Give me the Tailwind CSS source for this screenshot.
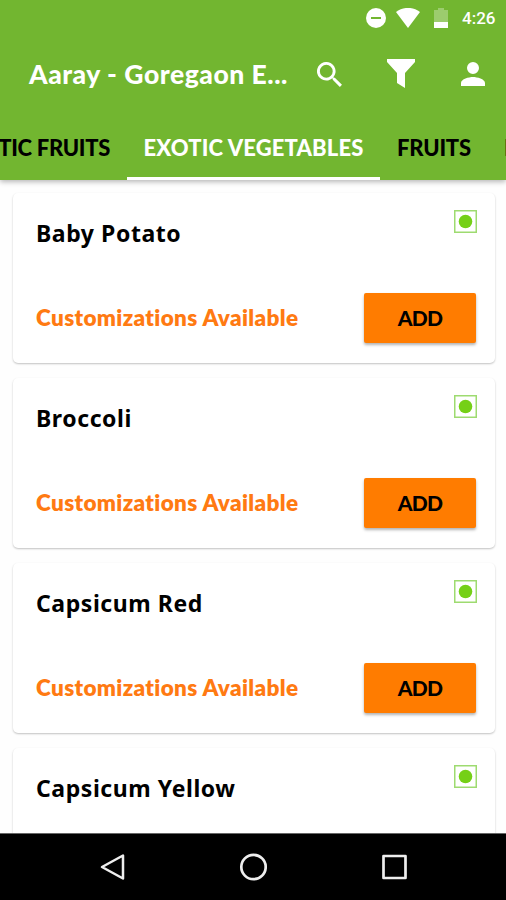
<!DOCTYPE html>
<html lang="en"><head><meta charset="utf-8"><title>Aaray</title>
<script src="https://cdn.jsdelivr.net/npm/@tailwindcss/browser@4"></script></head>
<body class="bg-white">
<div class="w-[506px] h-[900px] flex flex-col overflow-hidden font-['Lato',sans-serif]">
<header class="relative z-10 h-[180px] shrink-0 flex flex-col bg-[#72b630] text-white shadow-[0_2px_5px_rgba(0,0,0,0.28)]">
  <div class="h-[36px] flex items-center justify-end pr-[10px]">
    <svg class="w-5 h-5 mr-[10px]" viewBox="0 0 20 20"><circle cx="10" cy="10" r="10" fill="#fff"/><path d="M5 10H15" stroke="#72b630" stroke-width="2"/></svg>
    <svg class="w-6 h-5 mr-[14px]" viewBox="0 0 24 20"><path d="M0 4C7-1.500 17-1.500 24 4L12 20Z" fill="#fff"/></svg>
    <svg class="w-[14px] h-5 mr-[14px]" viewBox="0 0 14 20"><path d="M4 0H10V2H14V20H0V2H4Z" fill="#fff" opacity=".3"/><path d="M0 14H14V20H0Z" fill="#fff"/></svg>
    <span class="w-[34px] whitespace-nowrap font-['Roboto',sans-serif] font-medium text-[17px] leading-5">4:26</span>
  </div>
  <div class="h-[76px] flex items-center">
    <h1 class="ml-[29px] w-[288px] whitespace-nowrap font-black text-[26.500px] leading-8 tracking-[0.530px]">Aaray - Goregaon E...</h1>
    <svg class="w-[25px] h-[25px]" viewBox="3 3 17.500 17.500" fill="#fff"><path d="M15.500 14h-.79l-.28-.27A6.500 6.500 0 1 0 13.730 14.430l.27.28v.79l5 4.990L20.490 19zM9.500 14a4.500 4.500 0 1 1 0-9 4.500 4.500 0 0 1 0 9z"/></svg>
    <svg class="w-[28px] h-[30px] ml-[45px]" viewBox="0 0 28 30"><path d="M0 0H28V3L18 14V29L10 24V14L0 3Z" fill="#fff"/></svg>
    <svg class="w-[24px] h-[24px] ml-[46px]" viewBox="4 4 16 16" fill="#fff"><path d="M12 12a4 4 0 1 0 0-8 4 4 0 0 0 0 8zm0 2c-2.670 0-8 1.340-8 4v2h16v-2c0-2.660-5.330-4-8-4z"/></svg>
  </div>
  <nav class="h-[68px] flex overflow-hidden whitespace-nowrap font-black text-[22px] leading-[71px] text-black">
    <div class="w-[127px] shrink-0 flex justify-end pr-[17px]"><span class="tracking-[-0.3px]">EXOTIC FRUITS</span></div>
    <div class="w-[253px] shrink-0 text-center text-white border-b-[3px] border-white"><span class="tracking-[0.140px]">EXOTIC VEGETABLES</span></div>
    <div class="w-[108px] shrink-0 pl-[17px]"><span class="tracking-[-0.2px]">FRUITS</span></div>
    <div class="pl-[16px]">L</div>
  </nav>
</header>
<main id="list" class="flex-1 min-h-0 overflow-hidden pl-[13px] pr-[11px] pt-[13px] flex flex-col gap-[15px] bg-[#fefefe]"></main>
<footer class="h-[67px] shrink-0 bg-black border-t border-[#666] flex items-center justify-center gap-[113px]">
  <svg class="w-7 h-7" viewBox="0 0 28 28" fill="none" stroke="#eee" stroke-width="2.500" stroke-linejoin="round"><path d="M25 2.500V25.500L4 14Z"/></svg>
  <svg class="w-7 h-7" viewBox="0 0 28 28" fill="none" stroke="#eee" stroke-width="2.700"><circle cx="14.500" cy="14" r="12.200"/></svg>
  <svg class="w-7 h-7" viewBox="0 0 28 28" fill="none" stroke="#eee" stroke-width="2.700" stroke-linejoin="round"><path d="M3.500 3H25.500V25H3.500Z"/></svg>
</footer>
</div>
<script>
document.getElementById('list').innerHTML = ['Baby Potato','Broccoli','Capsicum Red','Capsicum Yellow'].map(n => `
<article class="h-[170px] shrink-0 rounded-[5px] bg-white shadow-[0_1px_2px_rgba(0,0,0,0.24)] pl-[23px] pr-[18px] flex flex-col">
  <div class="h-[100px] flex justify-between">
    <h2 class="pt-[24px] whitespace-nowrap font-['Noto_Sans',sans-serif] font-bold text-[23px] leading-8 tracking-[0.570px] text-black">${n}</h2>
    <svg class="mt-[17px] w-[23px] h-[23px]" viewBox="0 0 23 23"><path d="M.75.75H22.250V22.250H.75Z" fill="none" stroke="#9edb70" stroke-width="1.500"/><circle cx="11.500" cy="11.500" r="6.800" fill="#75d017"/></svg>
  </div>
  <div class="h-[50px] flex items-center justify-between">
    <span class="whitespace-nowrap font-extrabold text-[22.500px] leading-7 tracking-[0.350px] text-[#ff7a12]">Customizations Available</span>
    <button class="w-[112px] h-[50px] -translate-x-px rounded-[2px] bg-[#ff7c00] text-black font-black text-[21px] tracking-[-0.8px] shadow-[0_2px_3px_rgba(0,0,0,0.3)]">ADD</button>
  </div>
</article>`).join('');
</script>
</body></html>
